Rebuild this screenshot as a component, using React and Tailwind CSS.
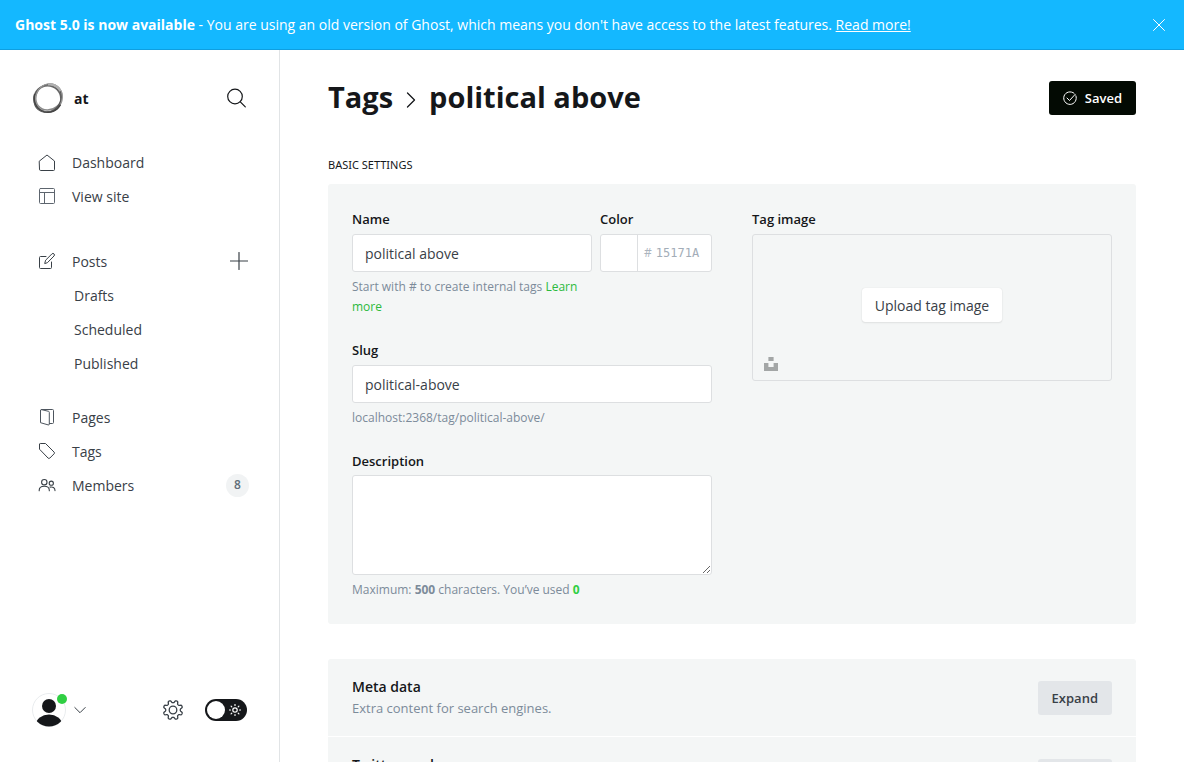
import React, { useState } from "react";

const line = {
  fill: "none",
  stroke: "currentColor",
  strokeLinecap: "round",
  strokeLinejoin: "round",
  "aria-hidden": true,
};

function gearPath(center, base, depth, teeth) {
  const steps = 160;
  const points = [];
  for (let i = 0; i < steps; i += 1) {
    const angle = (i / steps) * Math.PI * 2;
    const wave = Math.cos(teeth * (angle - Math.PI / teeth));
    const r = base + depth * Math.tanh(wave * 1.8);
    points.push(
      `${(center + r * Math.cos(angle)).toFixed(2)} ${(center + r * Math.sin(angle)).toFixed(2)}`
    );
  }
  return `M${points.join("L")}Z`;
}

const gear = gearPath(11, 8.5, 1.3, 8);

function GhostLogo() {
  return (
    <svg viewBox="0 0 32 32" className="size-8 shrink-0" fill="none" aria-hidden="true">
      <ellipse cx="15.6" cy="16.8" rx="13.4" ry="13.2" stroke="#666" strokeWidth="1.800" />
      <ellipse cx="16.800" cy="15.2" rx="13.6" ry="12.400" stroke="#8a8a8a" strokeWidth="1.500" transform="rotate(-40 16.8 15.2)" />
      <ellipse cx="15.6" cy="16.4" rx="14.800" ry="12.800" stroke="#555" strokeWidth="1" transform="rotate(-50 15.6 16.4)" />
      <ellipse cx="17" cy="16" rx="13.2" ry="14.400" stroke="#999" strokeWidth="1" transform="rotate(25 17 16)" />
      <path d="M2.6 12C1 19 4 27 12 29.7c6 1.800 13-.7 16.500-7" stroke="#444" strokeWidth="1.400" />
      <path d="M16 2.500c4.500-.8 10 1.500 12.500 6.500" stroke="#b0b0b0" strokeWidth="2.200" />
    </svg>
  );
}

function HomeIcon() {
  return (
    <svg viewBox="0 0 18 18" className="size-[18px]" {...line}>
      <path d="M1.500 8 9 2l7.500 6v8.500a1 1 0 0 1-1 1h-13a1 1 0 0 1-1-1z" />
    </svg>
  );
}

function LayoutIcon() {
  return (
    <svg viewBox="0 0 18 18" className="size-[18px] text-[#5d656e]" {...line}>
      <rect x="1.500" y="1.500" width="15" height="15" rx="1" />
      <path d="M1.500 5.500h15M6.500 5.500v11" />
    </svg>
  );
}

function PostsIcon() {
  return (
    <svg viewBox="0 0 18 18" className="size-[18px]" {...line}>
      <path d="M8 4.500H2.500a1 1 0 0 0-1 1v10a1 1 0 0 0 1 1h10a1 1 0 0 0 1-1V10" />
      <path d="M6.800 11.200l.8-3 6.300-6.300a1.400 1.400 0 0 1 2.100 2.100L9.700 10.400z" />
    </svg>
  );
}

function PagesIcon() {
  return (
    <svg viewBox="0 0 18 18" className="size-[18px] text-[#4d555e]" {...line}>
      <path d="M2.500 2.500v12.200l7.700 2.200a.8.800 0 0 0 1.100-.7V4.300a1 1 0 0 0-.8-1L3.300 1.600" />
      <path d="M2.500 2.500a1 1 0 0 1 1-1h11a1 1 0 0 1 1 1v12a1 1 0 0 1-1 1h-3" />
    </svg>
  );
}

function TagIcon() {
  return (
    <svg viewBox="0 0 18 18" className="size-[18px]" {...line}>
      <path d="M1.500 2.300v4.900l8.600 8.900a1.200 1.200 0 0 0 1.700 0l4.300-4.300a1.200 1.200 0 0 0 0-1.700L7.500 1.500H2.300a.8.800 0 0 0-.8.800z" />
    </svg>
  );
}

function MembersIcon() {
  return (
    <svg viewBox="0 0 18 18" className="size-[18px]" {...line} strokeWidth="1.100">
      <circle cx="6.300" cy="6.200" r="2.700" />
      <circle cx="13.300" cy="7.200" r="2.100" />
      <path d="M1.200 14.800v-.6C1.200 11.500 3.500 10.200 6.300 10.200s5 1.300 5 4v.6" />
      <path d="M12 11.100c2.700-.6 5 .7 5 3.500" />
    </svg>
  );
}

function NavLink({ icon, children }) {
  return (
    <a href="#" className="flex h-[34px] items-center gap-4 text-[#394047]">
      {icon}
      {children}
    </a>
  );
}

function Sidebar() {
  const [dark, setDark] = useState(false);
  return (
    <aside className="flex w-[280px] shrink-0 flex-col border-r border-[#e1e4e6] px-8 text-[14px]">
      <div className="mt-8 flex items-center justify-between">
        <a href="#" className="flex items-center gap-[10px] font-bold text-[#15171a]">
          <GhostLogo />
          at
        </a>
        <button type="button" aria-label="Search" className="text-[#15171a]">
          <svg viewBox="0 0 22 22" className="size-[22px]" {...line} strokeWidth="1.200">
            <circle cx="10" cy="9.500" r="7.300" />
            <path d="m15.300 14.800 5 5" />
          </svg>
        </button>
      </div>

      <nav className="-mr-0.5 mt-[31px] pl-1.5">
        <div>
          <NavLink icon={<HomeIcon />}>Dashboard</NavLink>
          <NavLink icon={<LayoutIcon />}>View site</NavLink>
        </div>
        <div className="mt-[31px]">
          <div className="flex items-center justify-between">
            <NavLink icon={<PostsIcon />}>Posts</NavLink>
            <button type="button" aria-label="New post" className="mr-px text-[#394047]">
              <svg viewBox="0 0 18 18" className="size-[18px]" {...line} strokeWidth="1.200">
                <path d="M9 .5v17M.5 9h17" />
              </svg>
            </button>
          </div>
          <ul className="pl-9 text-[#394047]">
            {["Drafts", "Scheduled", "Published"].map((label) => (
              <li key={label}>
                <a href="#" className="flex h-[34px] items-center">
                  {label}
                </a>
              </li>
            ))}
          </ul>
        </div>
        <div className="mt-5">
          <NavLink icon={<PagesIcon />}>Pages</NavLink>
          <NavLink icon={<TagIcon />}>Tags</NavLink>
          <div className="flex items-center justify-between">
            <NavLink icon={<MembersIcon />}>Members</NavLink>
            <span className="flex size-[23px] items-center justify-center rounded-full bg-[#f1f3f4] text-[12px] font-semibold text-[#626d79]">
              8
            </span>
          </div>
        </div>
      </nav>

      <div className="mt-auto mb-[35px] flex items-center justify-between">
        <button type="button" aria-label="Account" className="flex items-center gap-2 text-[#394047]">
          <span className="relative block">
            <svg viewBox="0 0 34 34" className="size-[34px]" aria-hidden="true">
              <clipPath id="avatar">
                <circle cx="17" cy="17" r="16.500" />
              </clipPath>
              <circle cx="17" cy="17" r="16.500" fill="#fff" stroke="#e9ecee" />
              <g clipPath="url(#avatar)" fill="#15171a">
                <circle cx="17" cy="13" r="7" />
                <ellipse cx="17" cy="31.500" rx="13" ry="10" />
              </g>
            </svg>
            <span className="absolute top-px -right-px size-[10px] rounded-full bg-[#30cf43]" />
          </span>
          <svg viewBox="0 0 12 12" className="size-3" {...line}>
            <path d="m.8 3.500 5.200 5.200 5.200-5.200" />
          </svg>
        </button>
        <div className="flex items-center gap-[21px]">
          <button type="button" aria-label="Settings" className="text-[#394047]">
            <svg viewBox="0 0 22 22" className="size-[22px]" {...line} strokeWidth="1.300">
              <path d={gear} />
              <circle cx="11" cy="11" r="3.800" />
            </svg>
          </button>
          <button
            type="button"
            role="switch"
            aria-checked={dark}
            aria-label="Night shift"
            onClick={() => setDark(!dark)}
            className="flex h-[22px] w-[42px] items-center justify-between rounded-full bg-[#15171a] pr-1.5 pl-0.5 text-white"
          >
            <span className="size-[18px] rounded-full bg-white" />
            <svg viewBox="0 0 12 12" className="size-3" {...line} strokeWidth="1.200">
              <circle cx="6" cy="6" r="2.200" />
              <path d="M6 .5v1M6 10.500v1M.5 6h1M10.500 6h1M2.100 2.100l.7.700M9.200 9.200l.7.700M2.100 9.900l.7-.7M9.200 2.800l.7-.7" />
            </svg>
          </button>
        </div>
      </div>
    </aside>
  );
}

const labelStyle = "block text-[13px] leading-5 font-semibold text-[#15171a]";
const fieldStyle =
  "block w-full rounded-[3px] border border-[#dddfe1] bg-white px-3 text-[14px] text-[#394047] outline-none";
const hintStyle = "mt-[5px] text-[12px] leading-5 text-[#7c8b9a]";

function BasicSettings() {
  const [name, setName] = useState("political above");
  const [slug, setSlug] = useState("political-above");
  const [description, setDescription] = useState("");
  return (
    <section className="grid grid-cols-2 gap-10 rounded-[3px] bg-[#f4f6f6] p-6 pt-[25px]">
      <div>
        <div className="flex gap-2">
          <div className="min-w-0 flex-1">
            <label htmlFor="tag-name" className={labelStyle}>Name</label>
            <input
              id="tag-name"
              value={name}
              onChange={(e) => setName(e.target.value)}
              className={`${fieldStyle} mt-[5px] h-[38px]`}
            />
            <p className={hintStyle}>
              Start with # to create internal tags{" "}
              <a href="#" className="text-[#2bba3c]">Learn more</a>
            </p>
          </div>
          <div className="w-28 shrink-0">
            <label htmlFor="tag-color" className={labelStyle}>Color</label>
            <div className="mt-[5px] flex h-[38px] items-center overflow-hidden rounded-[3px] border border-[#dddfe1] bg-white text-[12px] text-[#abb4be]">
              <span className="h-full w-[37px] shrink-0 border-r border-[#dddfe1]" />
              <span className="pl-1.5">#</span>
              <input
                id="tag-color"
                placeholder="15171A"
                className="w-full min-w-0 pl-1 font-['DejaVu_Sans_Mono',monospace] text-[12px] outline-none placeholder:text-[#a3adb8]"
              />
            </div>
          </div>
        </div>

        <label htmlFor="tag-slug" className={`${labelStyle} mt-[23px]`}>Slug</label>
        <input
          id="tag-slug"
          value={slug}
          onChange={(e) => setSlug(e.target.value)}
          className={`${fieldStyle} mt-[5px] h-[38px]`}
        />
        <p className={hintStyle}>localhost:2368/tag/political-above/</p>

        <label htmlFor="tag-description" className={`${labelStyle} mt-[23px]`}>Description</label>
        <textarea
          id="tag-description"
          value={description}
          onChange={(e) => setDescription(e.target.value)}
          className={`${fieldStyle} mt-1 h-[100px] resize py-2`}
        />
        <p className={hintStyle}>
          Maximum: <b>500</b> characters. You’ve used <b className="text-[#30cf43]">0</b>
        </p>
      </div>

      <div>
        <span className={labelStyle}>Tag image</span>
        <div className="relative mt-[5px] flex h-[147px] items-center justify-center rounded-[3px] border border-[#dddfe1] pb-1.5">
          <button
            type="button"
            className="h-[34px] rounded-[3px] bg-white px-[13px] pt-0.5 text-[14px] font-medium text-[#394047] shadow-[0_0_1px_rgba(0,0,0,0.15),0_1px_2px_rgba(0,0,0,0.08)]"
          >
            Upload tag image
          </button>
          <button type="button" aria-label="Search Unsplash" className="absolute bottom-[9px] left-[11px]">
            <svg viewBox="0 0 14 14" className="size-3.5" fill="#a3a6a6" aria-hidden="true">
              <path d="M4.400 0h5.200v4H4.400zM0 6h4.400v4h5.200V6H14v8H0z" />
            </svg>
          </button>
        </div>
      </div>
    </section>
  );
}

function ExpandRow({ title, text }) {
  return (
    <div className="flex items-start justify-between px-6 pt-[17px] pb-[18px]">
      <div>
        <h4 className="text-[14px] leading-[22px] font-semibold text-[#15171a]">{title}</h4>
        {text && <p className="text-[13px] leading-5 text-[#7c8b9a]">{text}</p>}
      </div>
      <button type="button" className="mt-[5px] h-[34px] rounded-[3px] bg-[#e3e6e9] px-3.5 pt-0.5 text-[13px] font-semibold text-[#394047]">
        Expand
      </button>
    </div>
  );
}

export default function App() {
  return (
    <div className="flex h-screen flex-col bg-white font-['Open_Sans','Noto_Sans',sans-serif]">
      <div className="flex h-[50px] shrink-0 items-center justify-between border-b border-[#0f9fe0] bg-[#14b8ff] px-[15px] text-[14px] text-white">
        <p>
          <b>Ghost 5.0 is now available</b> - You are using an old version of Ghost, which means you don't have access to the
          latest features. <a href="#" className="underline">Read more!</a>
        </p>
        <button type="button" aria-label="Close" className="mr-1">
          <svg viewBox="0 0 12 12" className="size-3" {...line}>
            <path d="m.5.5 11 11M11.500.5l-11 11" />
          </svg>
        </button>
      </div>
      <div className="flex min-h-0 flex-1">
        <Sidebar />
        <main className="min-w-0 flex-1 overflow-y-auto px-12 [scrollbar-width:none]">
          <header className="flex items-center justify-between pt-[26px]">
            <h2 className="flex items-center pb-0.5 text-[29px] leading-[42px] font-bold text-[#15171a]">
              <a href="#">Tags</a>
              <svg viewBox="0 0 10 16" className="mx-[13px] mt-1.5 h-4 w-[10px]" {...line} strokeWidth="1.300">
                <path d="m1.500 1 7 7-7 7" />
              </svg>
              political above
            </h2>
            <button
              type="button"
              className="flex h-[34px] items-center gap-2 rounded-[3px] bg-[#030a03] px-3.5 text-[13px] font-semibold text-white"
            >
              <svg viewBox="0 0 14 14" className="size-3.5" {...line}>
                <path d="M12.900 4.800A6.300 6.300 0 1 1 11 2.200" />
                <path d="m4 7 2.500 2.500L12.300 3.200" />
              </svg>
              <span className="pt-0.5">Saved</span>
            </button>
          </header>
          <h4 className="mt-[35px] mb-[9px] font-['Noto_Sans',sans-serif] text-[11px] leading-5 text-[#15171a] uppercase">
            Basic settings
          </h4>
          <BasicSettings />
          <section className="mt-[35px] divide-y divide-white rounded-[3px] bg-[#f4f6f6]">
            <ExpandRow title="Meta data" text="Extra content for search engines." />
            <ExpandRow title="Twitter card" />
          </section>
        </main>
      </div>
    </div>
  );
}
